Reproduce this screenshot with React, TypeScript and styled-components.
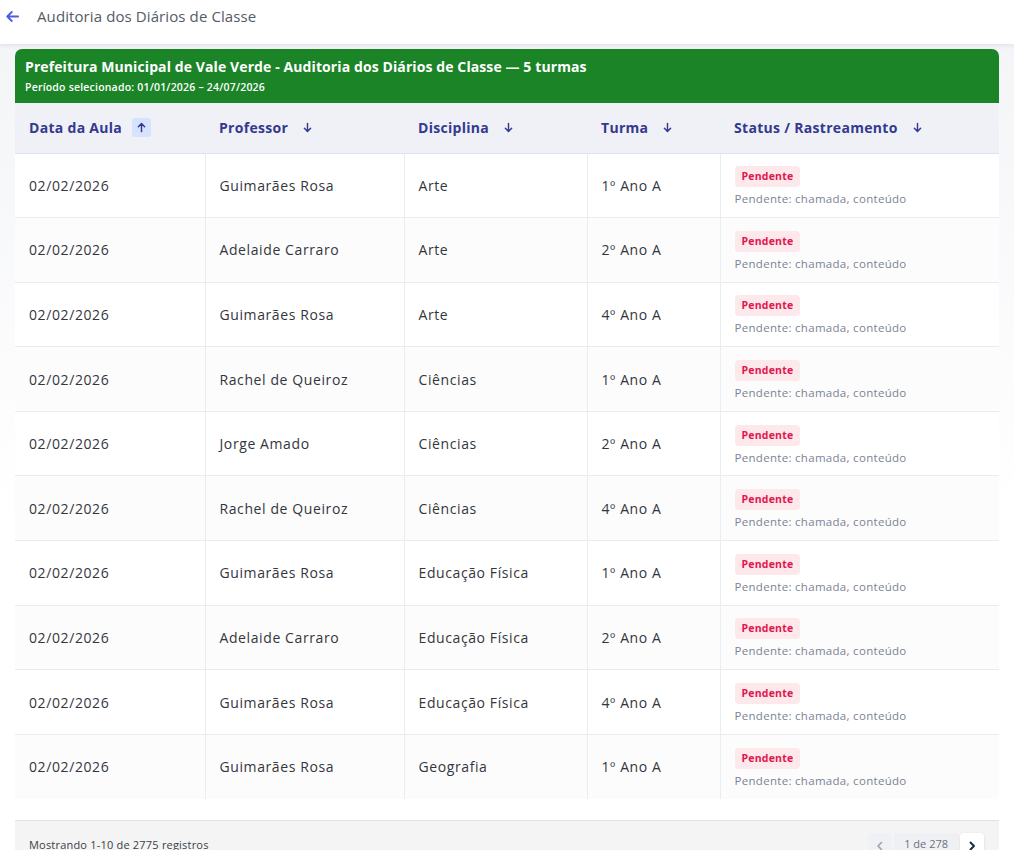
import styled, { createGlobalStyle } from "styled-components";
import { JSX } from "react";

const GlobalStyle = createGlobalStyle`
  html, body {
    margin: 0;
    padding: 0;
    background: #f6f7f9;
    font-family: "Open Sans", "Liberation Sans", sans-serif;
  }
  * {
    box-sizing: border-box;
  }
`;

const Page = styled.div`
  width: 1014px;
  min-height: 850px;
  background: linear-gradient(180deg, #f3f4f7 0%, #ffffff 60%);
`;

const TopBar = styled.header`
  height: 44px;
  display: flex;
  align-items: flex-start;
  gap: 17px;
  padding: 5px 0 0 5px;
  background: #ffffff;
  box-shadow: 0 2px 4px rgba(30, 40, 70, 0.08);
`;

const BackButton = styled.button`
  border: none;
  background: none;
  padding: 0;
  height: 22px;
  display: flex;
  align-items: center;
  cursor: pointer;

  svg {
    width: 15px;
    height: 15px;
  }
`;

const PageTitle = styled.h1`
  margin: 0;
  font-size: 15px;
  line-height: 22px;
  font-weight: 400;
  letter-spacing: 0.1px;
  color: #555a66;
`;

const Content = styled.main`
  padding: 5px 15px 0 15px;
`;

const Card = styled.section`
  background: #ffffff;
  border-radius: 7px 7px 0 0;
  overflow: hidden;
`;

const Banner = styled.div`
  height: 54px;
  background: #1b8427;
  color: #ffffff;
  padding: 9px 10px 0 10px;
`;

const BannerTitle = styled.div`
  font-size: 14px;
  font-weight: 700;
  line-height: 18px;
  letter-spacing: 0.1px;
`;

const BannerSub = styled.div`
  margin-top: 4px;
  font-size: 10.5px;
  font-weight: 600;
  line-height: 14px;
  letter-spacing: 0.2px;
`;

const Table = styled.table`
  width: 100%;
  border-collapse: collapse;
  table-layout: fixed;
`;

const HeadCell = styled.th<{ $width: number }>`
  width: ${({ $width }) => $width}px;
  height: 50px;
  padding: 0 14px;
  text-align: left;
  background: #eff1f6;
  border-bottom: 1px solid #dde3ee;
  color: #34398f;
  font-size: 14px;
  font-weight: 700;
  letter-spacing: 0.3px;
`;

const HeadInner = styled.span`
  display: inline-flex;
  align-items: center;
  gap: 10px;
`;

const SortIcon = styled.span<{ $active?: boolean }>`
  display: inline-flex;
  align-items: center;
  justify-content: center;
  width: 19px;
  height: 19px;
  border-radius: 3px;
  background: ${({ $active }) => ($active ? "#d5e3ff" : "transparent")};

  svg {
    width: 11px;
    height: 11px;
  }
`;

const Row = styled.tr<{ $alt: boolean }>`
  background: ${({ $alt }) => ($alt ? "#fcfcfc" : "#ffffff")};
  border-bottom: 1px solid #eaecf0;

  &:last-child {
    border-bottom: none;
  }
`;

const Cell = styled.td`
  height: 64.6px;
  padding: 0 14px;
  font-size: 14px;
  letter-spacing: 0.6px;
  color: #33363d;
  border-left: 1px solid #eaecf0;

  &:first-child {
    border-left: none;
  }
`;

const StatusCell = styled(Cell)`
  padding-top: 1px;
  letter-spacing: 0;
`;

const Badge = styled.span`
  display: inline-block;
  padding: 3px 7px;
  border-radius: 4px;
  background: #fde8ec;
  color: #e0164c;
  font-size: 10.5px;
  font-weight: 700;
  line-height: 15px;
  letter-spacing: 0.2px;
`;

const StatusNote = styled.div`
  margin-top: 4px;
  font-size: 11.5px;
  letter-spacing: 0.3px;
  color: #7b8394;
`;

const Spacer = styled.div`
  height: 21px;
  background: #ffffff;
`;

const Footer = styled.footer`
  height: 40px;
  display: flex;
  align-items: flex-start;
  justify-content: space-between;
  padding: 12px 15px 0 14px;
  background: #f4f4f4;
  border-top: 1px solid #dde3ee;
`;

const FooterText = styled.span`
  margin-top: 4px;
  font-size: 11px;
  letter-spacing: 0.2px;
  color: #3b3e45;
`;

const Pager = styled.div`
  display: flex;
  align-items: center;
  gap: 2px;
`;

const PageButton = styled.button<{ $enabled?: boolean }>`
  width: 24px;
  height: 26px;
  border: none;
  border-radius: 4px;
  display: flex;
  align-items: center;
  justify-content: center;
  background: ${({ $enabled }) => ($enabled ? "#ffffff" : "#f0f1f4")};
  box-shadow: ${({ $enabled }) => ($enabled ? "0 1px 3px rgba(0,0,0,0.12)" : "none")};
  padding: 0;

  svg {
    width: 12px;
    height: 12px;
  }
`;

const PageInfo = styled.span`
  height: 26px;
  padding: 0 10px 4px;
  display: flex;
  align-items: center;
  background: #eff0f4;
  font-size: 11px;
  color: #6b7080;
`;

const ArrowUp = ({ color }: { color: string }) => (
  <svg viewBox="0 0 12 12" fill="none" stroke={color} strokeWidth="1.6" strokeLinecap="round" strokeLinejoin="round">
    <path d="M6 10.5V1.8M2.6 5.1 6 1.6l3.4 3.5" />
  </svg>
);

const ArrowDown = ({ color }: { color: string }) => (
  <svg viewBox="0 0 12 12" fill="none" stroke={color} strokeWidth="1.6" strokeLinecap="round" strokeLinejoin="round">
    <path d="M6 1.5v8.7M2.6 6.9 6 10.4l3.4-3.5" />
  </svg>
);

const columns = [
  { label: "Data da Aula", width: 190, active: true },
  { label: "Professor", width: 199 },
  { label: "Disciplina", width: 183 },
  { label: "Turma", width: 133 },
  { label: "Status / Rastreamento", width: 279 },
];

const rows = [
  ["Guimarães Rosa", "Arte", "1º Ano A"],
  ["Adelaide Carraro", "Arte", "2º Ano A"],
  ["Guimarães Rosa", "Arte", "4º Ano A"],
  ["Rachel de Queiroz", "Ciências", "1º Ano A"],
  ["Jorge Amado", "Ciências", "2º Ano A"],
  ["Rachel de Queiroz", "Ciências", "4º Ano A"],
  ["Guimarães Rosa", "Educação Física", "1º Ano A"],
  ["Adelaide Carraro", "Educação Física", "2º Ano A"],
  ["Guimarães Rosa", "Educação Física", "4º Ano A"],
  ["Guimarães Rosa", "Geografia", "1º Ano A"],
];

const App = (): JSX.Element => {
  return (
    <Page>
      <GlobalStyle />
      <TopBar>
        <BackButton aria-label="Voltar">
          <svg viewBox="0 0 16 16" fill="none" stroke="#4b5de4" strokeWidth="1.9" strokeLinecap="round" strokeLinejoin="round">
            <path d="M14 8H2.5M7.2 3.2 2.4 8l4.8 4.8" />
          </svg>
        </BackButton>
        <PageTitle>Auditoria dos Diários de Classe</PageTitle>
      </TopBar>
      <Content>
        <Card>
          <Banner>
            <BannerTitle>
              Prefeitura Municipal de Vale Verde - Auditoria dos Diários de Classe — 5 turmas
            </BannerTitle>
            <BannerSub>Período selecionado: 01/01/2026 – 24/07/2026</BannerSub>
          </Banner>
          <Table>
            <thead>
              <tr>
                {columns.map((col) => (
                  <HeadCell key={col.label} $width={col.width}>
                    <HeadInner>
                      {col.label}
                      <SortIcon $active={col.active}>
                        {col.active ? <ArrowUp color="#34398f" /> : <ArrowDown color="#34398f" />}
                      </SortIcon>
                    </HeadInner>
                  </HeadCell>
                ))}
              </tr>
            </thead>
            <tbody>
              {rows.map(([teacher, subject, group], i) => (
                <Row key={i} $alt={i % 2 === 1}>
                  <Cell>02/02/2026</Cell>
                  <Cell>{teacher}</Cell>
                  <Cell>{subject}</Cell>
                  <Cell>{group}</Cell>
                  <StatusCell>
                    <Badge>Pendente</Badge>
                    <StatusNote>Pendente: chamada, conteúdo</StatusNote>
                  </StatusCell>
                </Row>
              ))}
            </tbody>
          </Table>
          <Spacer />
          <Footer>
            <FooterText>Mostrando 1-10 de 2775 registros</FooterText>
            <Pager>
              <PageButton aria-label="Anterior">
                <svg viewBox="0 0 12 12" fill="none" stroke="#9aa0ab" strokeWidth="1.5" strokeLinecap="round" strokeLinejoin="round">
                  <path d="M7.5 2.5 4 6l3.5 3.5" />
                </svg>
              </PageButton>
              <PageInfo>1 de 278</PageInfo>
              <PageButton $enabled aria-label="Próxima">
                <svg viewBox="0 0 12 12" fill="none" stroke="#1e2a4a" strokeWidth="2" strokeLinecap="round" strokeLinejoin="round">
                  <path d="M4.5 2.5 8 6l-3.5 3.5" />
                </svg>
              </PageButton>
            </Pager>
          </Footer>
        </Card>
      </Content>
    </Page>
  );
};

export default App;
